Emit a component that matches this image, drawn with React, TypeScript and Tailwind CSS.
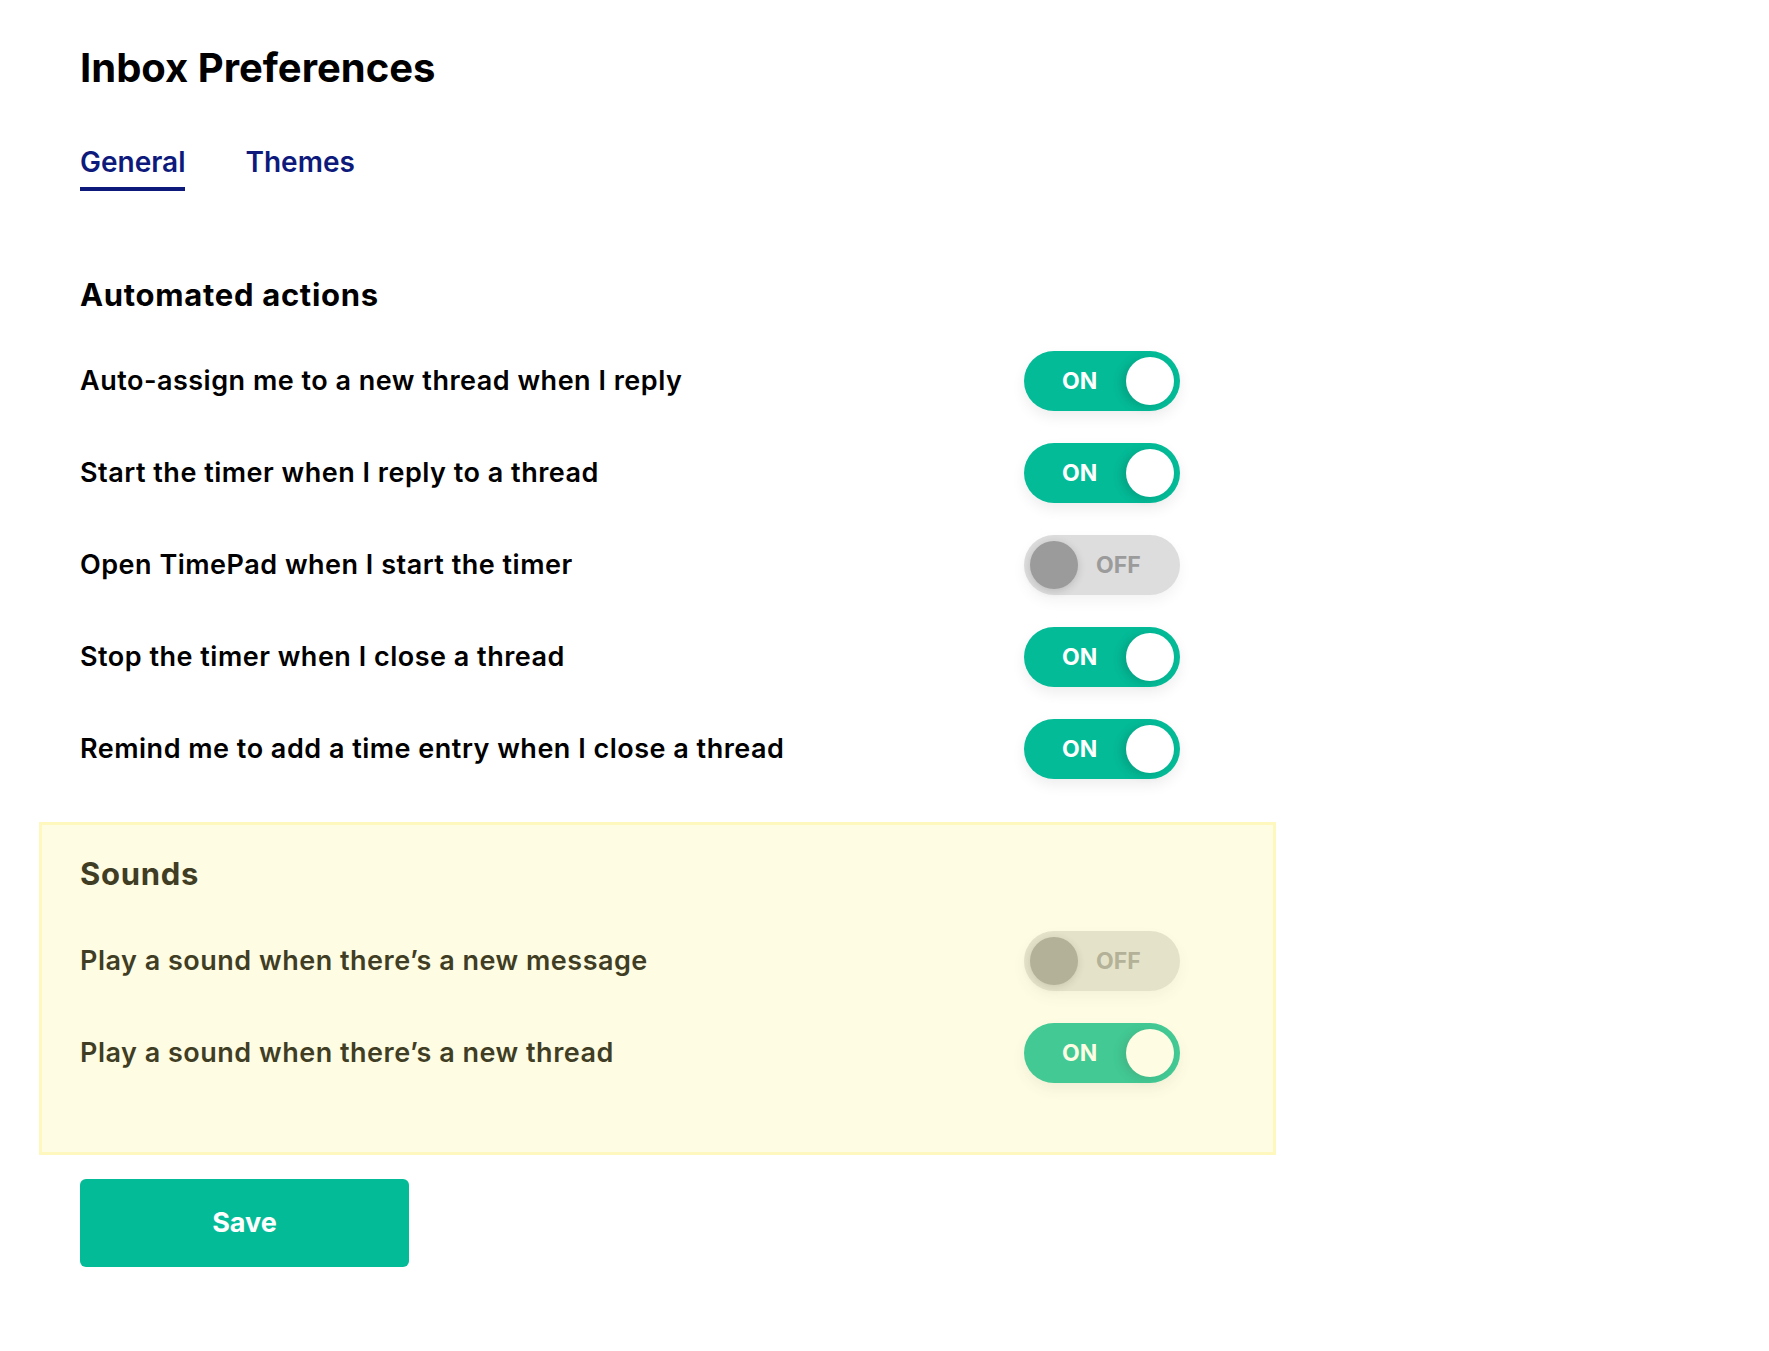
import { useState } from "react"

type Pref = { id: string; label: string; on: boolean }

const automated: Pref[] = [
  { id: "assign", label: "Auto-assign me to a new thread when I reply", on: true },
  { id: "start", label: "Start the timer when I reply to a thread", on: true },
  { id: "timepad", label: "Open TimePad when I start the timer", on: false },
  { id: "stop", label: "Stop the timer when I close a thread", on: true },
  { id: "remind", label: "Remind me to add a time entry when I close a thread", on: true },
]

const sounds: Pref[] = [
  { id: "message", label: "Play a sound when there\u2019s a new message", on: false },
  { id: "thread", label: "Play a sound when there\u2019s a new thread", on: true },
]

function Toggle({ on, onClick }: { on: boolean; onClick: () => void }) {
  if (on) {
    return (
      <button
        onClick={onClick}
        className="flex h-[60px] w-[156px] shrink-0 items-center rounded-full bg-[#04bb97] pl-[38px] pr-[6px] shadow-[0_6px_14px_rgba(0,0,0,0.07)]"
      >
        <span className="text-[23px] font-bold leading-none text-white">ON</span>
        <span className="ml-auto h-12 w-12 rounded-full bg-white shadow-[-5px_2px_10px_rgba(0,0,0,0.13)]" />
      </button>
    )
  }
  return (
    <button
      onClick={onClick}
      className="flex h-[60px] w-[156px] shrink-0 items-center rounded-full bg-[#dddddd] pl-[6px] shadow-[0_6px_14px_rgba(0,0,0,0.05)]"
    >
      <span className="h-12 w-12 rounded-full bg-[#9b9b9b] shadow-[0_2px_9px_rgba(0,0,0,0.16)]" />
      <span className="ml-[18px] text-[23px] font-bold leading-none text-[#9b9b9b]">OFF</span>
    </button>
  )
}

function Row({ pref, onToggle }: { pref: Pref; onToggle: () => void }) {
  return (
    <div className="flex w-[1100px] items-center justify-between">
      <span className="text-[27px] font-semibold leading-[32px] tracking-[0.5px] text-black">{pref.label}</span>
      <Toggle on={pref.on} onClick={onToggle} />
    </div>
  )
}

export default function App() {
  const [tab, setTab] = useState("general")
  const [auto, setAuto] = useState(automated)
  const [snd, setSnd] = useState(sounds)

  const flip = (list: Pref[], id: string) => list.map((p) => (p.id === id ? { ...p, on: !p.on } : p))

  return (
    <div className="min-h-screen bg-white pl-20 pt-[44px] pb-20 font-['Inter',sans-serif] text-black">
      <h1 className="text-[40px] font-bold leading-[48px]">Inbox Preferences</h1>

      <div className="mt-[53px] flex gap-[60px]">
        {["general", "themes"].map((t) => (
          <button
            key={t}
            onClick={() => setTab(t)}
            className={
              tab === t
                ? "border-b-4 border-[#0d1a7c] pb-2 text-[28px] font-semibold leading-[34px] text-[#0d1a7c]"
                : "border-b-4 border-transparent pb-2 text-[28px] font-semibold leading-[34px] text-[#0d1a7c]"
            }
          >
            {t === "general" ? "General" : "Themes"}
          </button>
        ))}
      </div>

      <h2 className="mt-[86px] text-[31px] font-bold leading-[36px] tracking-[0.7px]">Automated actions</h2>
      <div className="mt-[38px] flex flex-col gap-8">
        {auto.map((p) => (
          <Row key={p.id} pref={p} onToggle={() => setAuto(flip(auto, p.id))} />
        ))}
      </div>

      <section className="relative -ml-[41px] mt-[43px] w-[1237px] border-[3px] border-[#fef8bf] pb-[69px] pl-[38px] pt-[31px]">
        <h2 className="text-[31px] font-bold leading-[36px] tracking-[0.7px]">Sounds</h2>
        <div className="mt-[39px] flex flex-col gap-8">
          {snd.map((p) => (
            <Row key={p.id} pref={p} onToggle={() => setSnd(flip(snd, p.id))} />
          ))}
        </div>
        <div className="pointer-events-none absolute inset-0 bg-[#fcf38b]/25" />
      </section>

      <button className="mt-6 h-[88px] w-[329px] rounded-md bg-[#04bb98] text-[27px] font-bold text-white">
        Save
      </button>
    </div>
  )
}
